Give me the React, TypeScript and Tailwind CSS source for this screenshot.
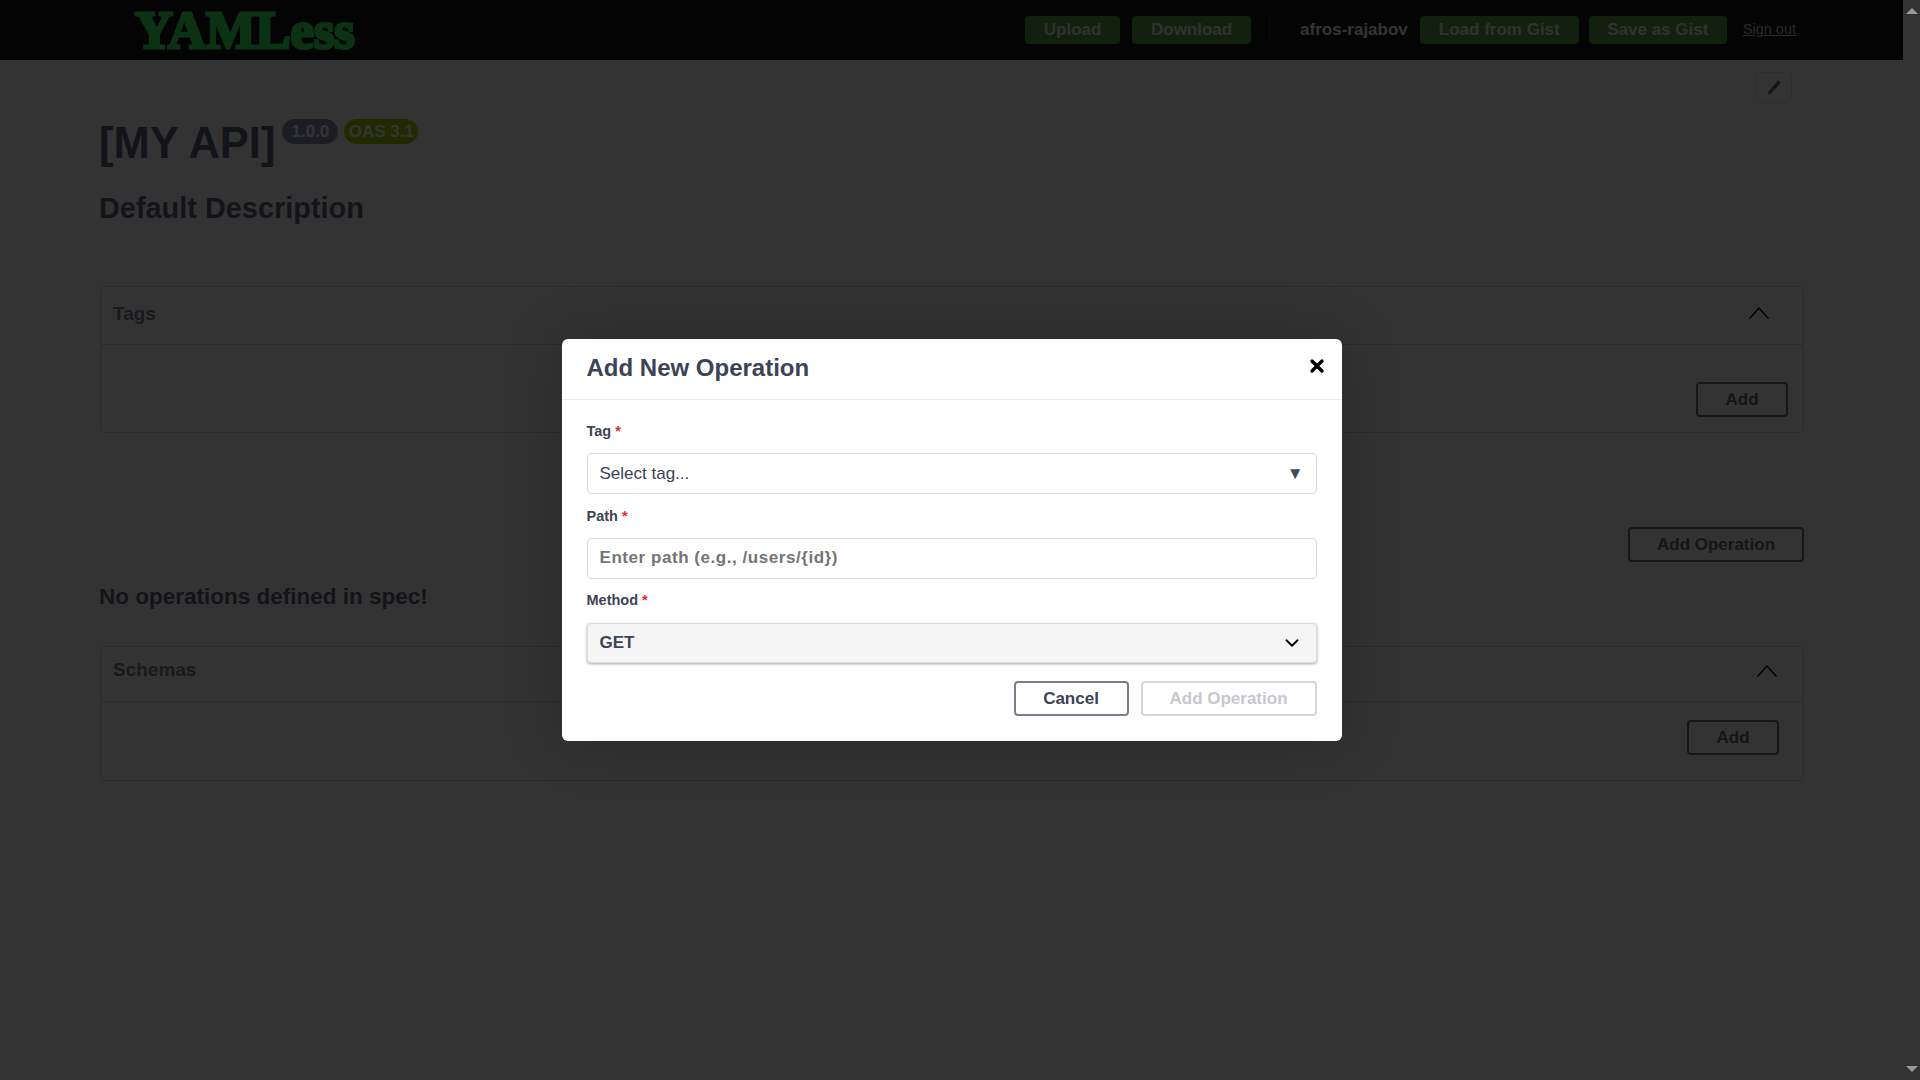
import React from 'react'
import { ChevronDown, X } from 'lucide-react'

const HeaderButton = ({ label, width }: { label: string; width: string }) => (
  <button className={`h-[28px] ${width} rounded-[4px] bg-[#5aa048] text-[17px] font-bold text-[#eeeeee]`}>
    {label}
  </button>
)

const OutlineButton = ({ label, className }: { label: string; className: string }) => (
  <button className={`h-[35px] rounded-[4px] border-2 border-[#6f7380] text-[17px] font-bold text-[#666b85] ${className}`}>
    {label}
  </button>
)

const BigChevron = ({ className }: { className?: string }) => (
  <svg className={className} width="20" height="12" viewBox="0 0 20 12" fill="none" stroke="#000" strokeWidth="1.4">
    <path d="M0.5 11.5 10 1l9.5 10.5" />
  </svg>
)

const Required = ({ label }: { label: string }) => (
  <label className="block h-[20px] text-[14.5px] leading-[20px] font-bold text-[#3d4356]">
    {label} <span className="text-[#e02d2d]">*</span>
  </label>
)

const App = () => {
  return (
    <div className="flex h-screen w-screen overflow-hidden bg-white font-['Liberation_Sans',Arial,sans-serif]">
      <div className="relative flex-1 overflow-hidden">
        {/* Top bar */}
        <header className="flex h-[60px] items-center bg-[#141414] pl-[135px]">
          <span className="font-['Liberation_Serif',serif] text-[52.5px] leading-[48px] font-bold text-[#3cfa64] [-webkit-text-stroke:3px_#3cfa64]">
            YAMLess
          </span>
          <div className="ml-auto flex items-center pr-[107px]">
            <HeaderButton label="Upload" width="w-[95px]" />
            <HeaderButton label="Download" width="ml-[12px] w-[119px]" />
            <div className="ml-[18px] h-[28px] w-px bg-[#333]" />
            <span className="ml-[30px] text-[17px] font-bold text-white">afros-rajabov</span>
            <HeaderButton label="Load from Gist" width="ml-[12px] w-[159px]" />
            <HeaderButton label="Save as Gist" width="ml-[10px] w-[138px]" />
            <a className="ml-[16px] text-[14.5px] text-[#ccc] underline">Sign out</a>
          </div>
        </header>

        <main className="pr-[99px] pl-[100px]">
          <div className="flex justify-end pt-[12px] pr-[12px]">
            <button className="flex h-[31px] w-[36px] items-center justify-center rounded-[4px] border border-[#e5e5e5]">
              <svg width="14" height="15" viewBox="0 0 14 15" fill="#666b85">
                <path d="M11 0.5 13 1.5 12.5 4.5 4 13.5 1 14.5l0.6-3z" />
              </svg>
            </button>
          </div>

          <div className="mt-[19px] -ml-[1px] flex h-[46px] items-start">
            <h1 className="text-[43.5px] leading-[42px] font-bold text-[#61657f]">[MY API]</h1>
            <span className="-mt-[3px] ml-[7px] flex h-[25px] w-[56px] items-center justify-center rounded-full bg-[#8e92ad] text-[17px] font-bold text-white">
              1.0.0
            </span>
            <span className="-mt-[3px] ml-[6px] flex h-[25px] w-[74px] items-center justify-center rounded-full bg-[#a3cc00] text-[17px] font-bold text-white">
              OAS 3.1
            </span>
          </div>

          <h2 className="mt-[23px] -ml-[1px] text-[28.9px] leading-[34px] font-bold text-[#61657f]">Default Description</h2>

          {/* Tags */}
          <section className="mt-[61px] h-[147px] rounded-[4px] border border-[#d1d5db]">
            <div className="flex h-[58px] items-center justify-between border-b border-[#d1d5db] pr-[34px] pb-[2px] pl-[12px]">
              <span className="text-[19px] font-bold text-[#7b8096]">Tags</span>
              <BigChevron className="mb-[3px]" />
            </div>
            <div className="flex justify-end pt-[37px] pr-[15px]">
              <OutlineButton label="Add" className="w-[92px]" />
            </div>
          </section>

          <div className="mt-[94px] flex justify-end">
            <OutlineButton label="Add Operation" className="w-[176px]" />
          </div>

          <h3 className="mt-[21px] -ml-[1px] text-[22.5px] leading-[28px] font-bold text-[#61657f]">No operations defined in spec!</h3>

          {/* Schemas */}
          <section className="mt-[35px] h-[135px] rounded-[4px] border border-[#d1d5db]">
            <div className="flex h-[55px] items-center justify-between border-b border-[#d1d5db] pr-[26px] pb-[5px] pl-[12px]">
              <span className="mb-[3px] text-[19px] font-bold text-[#7b8096]">Schemas</span>
              <BigChevron className="mb-[2px]" />
            </div>
            <div className="flex justify-end pt-[18px] pr-[24px]">
              <OutlineButton label="Add" className="w-[92px]" />
            </div>
          </section>
        </main>

        {/* Modal */}
        <div className="absolute inset-0 flex items-center justify-center bg-black/80">
          <div className="w-[780px] rounded-[6px] bg-white shadow-[0_0_60px_rgba(0,0,0,0.2)]">
            <div className="flex h-[61px] items-center justify-between border-b border-[#ececec] pr-[15px] pl-[25px]">
              <h2 className="pb-[2px] text-[24px] font-bold text-[#3d4356]">Add New Operation</h2>
              <X className="-mt-[7px] size-[20px] text-black" strokeWidth={4} />
            </div>

            <div className="px-[25px] pt-[21px] pb-[25px]">
              <Required label="Tag" />
              <div className="mt-[12px] flex h-[41px] items-center justify-between rounded-[4px] border border-[#d8dade] pr-[12px] pl-[12px] text-[17px] text-[#3d4356]">
                <span>Select tag...</span>
                <span className="text-[17px] text-[#434a60]">▼</span>
              </div>

              <div className="mt-[12px]">
                <Required label="Path" />
              </div>
              <input
                readOnly
                placeholder="Enter path (e.g., /users/{id})"
                className="mt-[12px] block h-[41px] w-full rounded-[4px] border border-[#d8dade] px-[12px] pb-[1px] text-[17px] font-bold tracking-[0.55px] outline-none placeholder:text-[#757575]"
              />

              <div className="mt-[11px]">
                <Required label="Method" />
              </div>
              <div className="mt-[13px] flex h-[40px] items-center justify-between rounded-[4px] border border-[#dcdcdc] bg-[#f5f5f5] pr-[13px] pl-[12px] shadow-[0_1px_3px_rgba(0,0,0,0.35)]">
                <span className="text-[17px] font-bold text-[#3d4356]">GET</span>
                <ChevronDown className="size-[22px] text-black" strokeWidth={2} />
              </div>

              <div className="mt-[18px] flex justify-end gap-[12px]">
                <button className="h-[35px] w-[115px] rounded-[4px] border-2 border-[#7b7f8a] text-[17px] font-bold text-[#3d4356]">
                  Cancel
                </button>
                <button className="h-[35px] w-[176px] rounded-[4px] border-2 border-[#d4d6da] text-[17px] font-bold text-[#c6c8ce]">
                  Add Operation
                </button>
              </div>
            </div>
          </div>
        </div>
      </div>

      {/* Scrollbar strip */}
      <div className="flex w-[17px] flex-col items-center justify-between bg-[#333] pt-[8px] pb-[8px]">
        <div className="h-0 w-0 border-r-[6px] border-b-[6px] border-l-[6px] border-r-transparent border-b-[#9a9a9a] border-l-transparent" />
        <div className="h-0 w-0 border-t-[6px] border-r-[6px] border-l-[6px] border-t-[#9a9a9a] border-r-transparent border-l-transparent" />
      </div>
    </div>
  )
}

export default App
